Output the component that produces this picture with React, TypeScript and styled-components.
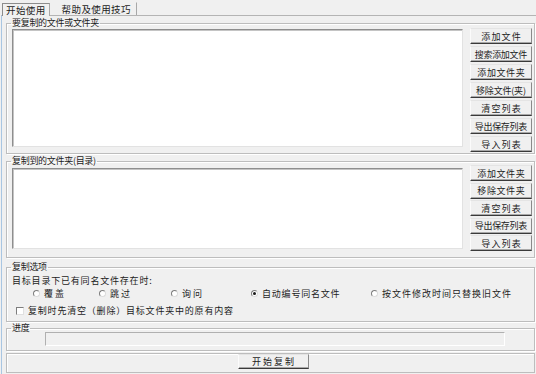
import * as React from 'react';
import styled, { createGlobalStyle } from 'styled-components';

const Global = createGlobalStyle`
  body {
    margin: 0;
    background: #f0f0f0;
  }
`;

const Window = styled.div`
  width: 536px;
  height: 374px;
  box-sizing: border-box;
  padding-left: 1px;
  background: #f0f0f0;
  font-family: 'Noto Sans CJK SC', 'Noto Sans', sans-serif;
  font-size: 9px;
  color: #1c1c1c;
  display: flex;
  flex-direction: column;
  overflow: hidden;
`;

const TabBar = styled.div`
  display: flex;
  align-items: flex-end;
  height: 15px;
  padding-left: 1px;
  gap: 6px;
`;

const Tab = styled.div<{ $active?: boolean }>`
  height: 13px;
  line-height: 12px;
  box-sizing: border-box;
  padding: 0 ${(p) => (p.$active ? 3 : 5)}px;
  font-size: 9.5px;
  letter-spacing: 0.4px;
  border: 1px solid ${(p) => (p.$active ? '#8c8c8c' : 'transparent')};
  border-right-color: #a8a8a8;
  border-bottom: none;
  margin-bottom: ${(p) => (p.$active ? -1 : 0)}px;
  background: #f0f0f0;
  position: relative;
`;

const Panel = styled.div`
  flex: 1;
  border-top: 1px solid #b4b4b4;
  border-left: 1px solid #a9c6e2;
  padding: 1px 1px 0 4px;
  display: flex;
  flex-direction: column;
`;

const Group = styled.fieldset<{ $pb: number; $mt?: number; $pl?: number }>`
  margin: ${(p) => p.$mt || 0}px 0 0 0;
  padding: 0 0 ${(p) => p.$pb}px ${(p) => p.$pl ?? 5}px;
  border: 1px solid #bdbdbd;
  box-shadow: inset 1px 1px 0 #fff, 1px 1px 0 #fff;
  min-width: 0;
`;

const Legend = styled.legend<{ $ml?: number }>`
  font-size: 9px;
  line-height: 12px;
  padding: 0 1px;
  margin-left: ${(p) => p.$ml ?? -1}px;
  letter-spacing: -0.3px;
`;

const Row = styled.div`
  display: flex;
  align-items: flex-start;
  gap: 7px;
`;

const ListBox = styled.div<{ $h: number; $mt?: number }>`
  width: 451px;
  height: ${(p) => p.$h}px;
  margin-top: ${(p) => p.$mt || 0}px;
  box-sizing: border-box;
  background: #fff;
  border: 1px solid;
  border-color: #8e8e8e #e2e2e2 #e2e2e2 #8e8e8e;
  box-shadow: inset 1px 1px 0 #c4c4c4;
`;

const ButtonColumn = styled.div<{ $gap: number; $mt: number }>`
  width: 62px;
  display: flex;
  flex-direction: column;
  gap: ${(p) => p.$gap}px;
  margin-top: ${(p) => p.$mt}px;
`;

const Button = styled.button<{ $ls?: number; $w?: number; $h?: number }>`
  width: ${(p) => p.$w ?? 62}px;
  height: ${(p) => p.$h ?? 16}px;
  box-sizing: border-box;
  padding: 0;
  font-family: inherit;
  font-size: 9px;
  line-height: 13px;
  letter-spacing: ${(p) => p.$ls ?? 0}px;
  text-indent: ${(p) => p.$ls ?? 0}px;
  color: #1c1c1c;
  background: #f0f0f0;
  border: 1px solid;
  border-color: #e4e4e4 #8a8a8a #3a3a3a #fbfbfb;
  box-shadow: inset 0 -1px 0 #a8a8a8;
  white-space: nowrap;
`;

const Line = styled.div<{ $mt?: number; $pl?: number }>`
  height: 13px;
  line-height: 13px;
  display: flex;
  align-items: center;
  margin-top: ${(p) => p.$mt || 0}px;
  padding-left: ${(p) => p.$pl || 0}px;
  letter-spacing: 0.8px;
  white-space: nowrap;
`;

const Option = styled.label<{ $w?: number; $ls?: number }>`
  display: inline-flex;
  align-items: center;
  gap: 4px;
  width: ${(p) => (p.$w ? `${p.$w}px` : 'auto')};
  letter-spacing: ${(p) => p.$ls ?? 0.8}px;
  flex: none;
`;

const RadioMark = styled.span<{ $on?: boolean }>`
  width: 7px;
  height: 7px;
  box-sizing: border-box;
  border-radius: 50%;
  border: 1px solid;
  border-color: #7d7d7d #dcdcdc #dcdcdc #7d7d7d;
  background: #fff;
  display: flex;
  align-items: center;
  justify-content: center;
  &::after {
    content: '';
    width: 3px;
    height: 3px;
    border-radius: 50%;
    background: ${(p) => (p.$on ? '#1a1a1a' : 'transparent')};
  }
`;

const CheckMark = styled.span`
  width: 8px;
  height: 8px;
  box-sizing: border-box;
  border: 1px solid;
  border-color: #7d7d7d #e0e0e0 #e0e0e0 #7d7d7d;
  background: #fff;
`;

const Progress = styled.div`
  width: 460px;
  height: 14px;
  margin-top: -2px;
  box-sizing: border-box;
  border: 1px solid;
  border-color: #b0b0b0 #fff #fff #b0b0b0;
  background: #f0f0f0;
`;

const Footer = styled.div`
  margin-top: 2px;
  height: 20px;
  box-sizing: border-box;
  border: 1px solid #bdbdbd;
  box-shadow: inset 1px 1px 0 #fff;
  display: flex;
  justify-content: center;
  padding-left: 5px;
`;

const topButtons: [string, number][] = [
  ['添加文件', 1.2],
  ['搜索添加文件', -0.3],
  ['添加文件夹', 0.6],
  ['移除文件(夹)', -0.2],
  ['清空列表', 1.2],
  ['导出保存列表', -0.3],
  ['导入列表', 1.2],
];

const bottomButtons: [string, number][] = [
  ['添加文件夹', 0.6],
  ['移除文件夹', 0.6],
  ['清空列表', 1.2],
  ['导出保存列表', -0.3],
  ['导入列表', 1.2],
];

const options: [string, number | undefined, boolean, number][] = [
  ['覆盖', 66, false, 2],
  ['跳过', 72, false, 2],
  ['询问', 80, false, 2],
  ['自动编号同名文件', 120, true, 0.8],
  ['按文件修改时间只替换旧文件', undefined, false, 1],
];

export default function App() {
  return (
    <Window>
      <Global />
      <TabBar>
        <Tab $active>开始使用</Tab>
        <Tab>帮助及使用技巧</Tab>
      </TabBar>
      <Panel>
        <Group $pb={1}>
          <Legend>要复制的文件或文件夹</Legend>
          <Row>
            <ListBox $h={118} />
            <ButtonColumn $gap={2} $mt={-1}>
              {topButtons.map(([t, ls]) => (
                <Button key={t} $ls={ls}>
                  {t}
                </Button>
              ))}
            </ButtonColumn>
          </Row>
        </Group>
        <Group $pb={6} $mt={1}>
          <Legend>复制到的文件夹(目录)</Legend>
          <Row>
            <ListBox $h={81} $mt={1} />
            <ButtonColumn $gap={1.5} $mt={-2}>
              {bottomButtons.map(([t, ls]) => (
                <Button key={t} $ls={ls}>
                  {t}
                </Button>
              ))}
            </ButtonColumn>
          </Row>
        </Group>
        <Group $pb={4} $mt={3}>
          <Legend>复制选项</Legend>
          <Line $mt={1}>目标目录下已有同名文件存在时:</Line>
          <Line $pl={21}>
            {options.map(([t, w, on, ls]) => (
              <Option key={t} $w={w} $ls={ls}>
                <RadioMark $on={on} />
                {t}
              </Option>
            ))}
          </Line>
          <Line $mt={4} $pl={4}>
            <Option>
              <CheckMark />
              复制时先清空（删除）目标文件夹中的原有内容
            </Option>
          </Line>
        </Group>
        <Group $pb={4} $pl={38}>
          <Legend $ml={-34}>进度</Legend>
          <Progress />
        </Group>
        <Footer>
          <Button $w={71} $h={15} $ls={2}>
            开始复制
          </Button>
        </Footer>
      </Panel>
    </Window>
  );
}
